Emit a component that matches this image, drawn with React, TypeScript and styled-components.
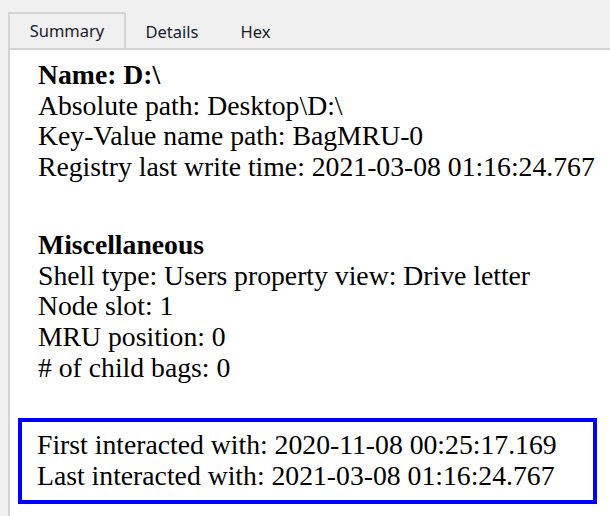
import React from "react";
import styled, { createGlobalStyle } from "styled-components";

const Global = createGlobalStyle`
  html, body { margin: 0; padding: 0; background: #f0f0f0; }
  body { width: 610px; height: 516px; overflow: hidden; }
`;

const Frame = styled.div`
  display: flex;
  flex-direction: column;
  padding: 12px 0 0 8px;
  height: 516px;
  box-sizing: border-box;
`;

const TabStrip = styled.div`
  display: flex;
  align-items: flex-end;
  height: 36px;
  border-bottom: 2px solid #d4d4d4;
`;

const Tab = styled.div<{ $active?: boolean; $w: number }>`
  width: ${(p) => p.$w}px;
  height: ${(p) => (p.$active ? 36 : 34)}px;
  box-sizing: border-box;
  display: flex;
  align-items: center;
  justify-content: center;
  font-family: "Noto Sans", "Open Sans", sans-serif;
  font-size: 16.5px;
  color: #1a1a2a;
  background: #f0f0f0;
  border: ${(p) => (p.$active ? "2px solid #d4d4d4" : "none")};
  border-bottom: none;
  padding-bottom: ${(p) => (p.$active ? 2 : 0)}px;
`;

const Panel = styled.div`
  flex: 1;
  background: #ffffff;
  border-left: 2px solid #d4d4d4;
  padding: 10px 0 0 28px;
  font-family: "Liberation Serif", "Times New Roman", serif;
  font-size: 27.7px;
  line-height: 30.7px;
  color: #000;
`;

const Section = styled.div<{ $gap: number }>`
  margin-bottom: ${(p) => p.$gap}px;
`;

const Line = styled.div<{ $bold?: boolean }>`
  font-weight: ${(p) => (p.$bold ? 700 : 400)};
  white-space: nowrap;
`;

const Highlight = styled.div`
  margin-left: -20px;
  width: 579px;
  box-sizing: border-box;
  border: 4px solid #0000ff;
  padding: 8px 0 9px 15px;
`;

export default function App() {
  return (
    <>
      <Global />
      <Frame>
        <TabStrip>
          <Tab $active $w={118}>Summary</Tab>
          <Tab $w={92}>Details</Tab>
          <Tab $w={75}>Hex</Tab>
        </TabStrip>
        <Panel>
          <Section $gap={47}>
            <Line $bold>Name: D:\</Line>
            <Line>Absolute path: Desktop\D:\</Line>
            <Line>Key-Value name path: BagMRU-0</Line>
            <Line>Registry last write time: 2021-03-08 01:16:24.767</Line>
          </Section>
          <Section $gap={34.5}>
            <Line $bold>Miscellaneous</Line>
            <Line>Shell type: Users property view: Drive letter</Line>
            <Line>Node slot: 1</Line>
            <Line>MRU position: 0</Line>
            <Line># of child bags: 0</Line>
          </Section>
          <Highlight>
            <Line>First interacted with: 2020-11-08 00:25:17.169</Line>
            <Line>Last interacted with: 2021-03-08 01:16:24.767</Line>
          </Highlight>
        </Panel>
      </Frame>
    </>
  );
}
